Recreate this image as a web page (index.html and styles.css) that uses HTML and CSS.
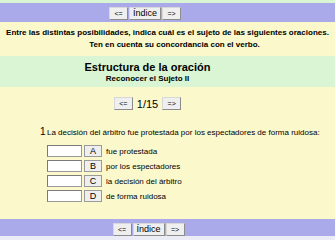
FILE: index.html
```html
<!DOCTYPE html>
<html lang="es">
<head>
    <meta charset="UTF-8">
    <title>Estructura de la oración</title>
    <link rel="stylesheet" href="styles.css">
</head>
<body>
    <div class="strip"></div>

    <div class="navbar">
        <div class="nav">
            <button class="nav-btn arrow">&lt;=</button>
            <button class="nav-btn index">Índice</button>
            <button class="nav-btn arrow">=&gt;</button>
        </div>
    </div>

    <div class="intro">
        <p>Entre las distintas posibilidades, indica cuál es el sujeto de las siguientes oraciones.</p>
        <p class="second">Ten en cuenta su concordancia con el verbo.</p>
    </div>

    <div class="heading">
        <h1>Estructura de la oración</h1>
        <h2>Reconocer el Sujeto II</h2>
    </div>

    <div class="exercise">
        <div class="pager">
            <button class="nav-btn arrow">&lt;=</button>
            <span class="count">1/15</span>
            <button class="nav-btn arrow">=&gt;</button>
        </div>

        <div class="question">
            <span class="num">1</span>
            <span class="text">La decisión del árbitro fue protestada por los espectadores de forma ruidosa:</span>
        </div>

        <div class="options">
            <div class="option">
                <input type="text" class="answer">
                <button class="letter">A</button>
                <span class="label">fue protestada</span>
            </div>
            <div class="option">
                <input type="text" class="answer">
                <button class="letter">B</button>
                <span class="label">por los espectadores</span>
            </div>
            <div class="option">
                <input type="text" class="answer">
                <button class="letter">C</button>
                <span class="label">la decisión del árbitro</span>
            </div>
            <div class="option">
                <input type="text" class="answer">
                <button class="letter">D</button>
                <span class="label">de forma ruidosa</span>
            </div>
        </div>
    </div>

    <div class="navbar bottom">
        <div class="nav">
            <button class="nav-btn arrow">&lt;=</button>
            <button class="nav-btn index">Índice</button>
            <button class="nav-btn arrow">=&gt;</button>
        </div>
    </div>

    <div class="strip bottom-strip"></div>
</body>
</html>
```

FILE: styles.css
```css
* {
    margin: 0;
    padding: 0;
    box-sizing: border-box;
}

body {
    font-family: "Liberation Sans", Arial, sans-serif;
    background: #d9f5d3;
    color: #000;
    width: 335px;
    height: 240px;
    overflow: hidden;
}

.strip {
    height: 3px;
    background: #d9f5d3;
}

.bottom-strip {
    height: 10px;
    background: #ececf6;
}

.navbar {
    background: #aaaaea;
    height: 19px;
    padding-top: 4px;
    width: 335px;
}

.navbar.bottom {
    height: 17px;
    padding-top: 4px;
}

.nav {
    width: 290px;
    display: flex;
    justify-content: center;
    gap: 1px;
}

.navbar.bottom .nav {
    width: 297px;
}

.nav-btn {
    font-family: "Liberation Sans", Arial, sans-serif;
    background: #efefef;
    border: 1px solid #8c8c8c;
    border-top-color: #d8d8d8;
    border-left-color: #d8d8d8;
    height: 13px;
    font-size: 8px;
    line-height: 11px;
    color: #000;
}

.nav-btn.arrow {
    width: 19px;
    font-size: 7px;
}

.nav-btn.index {
    width: 32px;
    font-size: 9px;
}

.intro {
    background: #fbf8cc;
    height: 34px;
    padding-top: 5px;
    text-align: center;
    font-weight: bold;
    font-size: 8px;
}

.intro p {
    line-height: 12px;
}

.intro .second {
    padding-left: 14px;
}

.heading {
    background: #d9f5d3;
    height: 31px;
    width: 335px;
    padding-right: 40px;
    padding-top: 5px;
    text-align: center;
}

.heading h1 {
    font-size: 11px;
    line-height: 13px;
}

.heading h2 {
    font-size: 8px;
    line-height: 10px;
}

.exercise {
    background: #fbf8cc;
    height: 132px;
    padding-top: 10px;
}

.pager {
    width: 295px;
    display: flex;
    justify-content: center;
    align-items: center;
    gap: 3px;
}

.pager .nav-btn {
    height: 13px;
}

.count {
    font-size: 11px;
    padding: 0 1px;
}

.question {
    display: flex;
    align-items: baseline;
    margin-top: 16px;
    padding-left: 40px;
}

.question .num {
    font-size: 10px;
    width: 7px;
}

.question .text {
    font-size: 8px;
}

.options {
    margin-top: 8px;
    padding-left: 47px;
    display: flex;
    flex-direction: column;
    gap: 3px;
}

.option {
    display: flex;
    align-items: center;
    height: 12px;
}

.answer {
    width: 35px;
    height: 12px;
    background: #fff;
    border: 1px solid #9a9a9a;
    border-top-color: #7a7a7a;
    border-left-color: #7a7a7a;
}

.letter {
    font-family: "Liberation Sans", Arial, sans-serif;
    width: 18px;
    height: 12px;
    margin-left: 2px;
    background: #efefef;
    border: 1px solid #9a9a9a;
    font-size: 9px;
    line-height: 10px;
    color: #000;
}

.label {
    font-size: 8px;
    margin-left: 4px;
}
```
